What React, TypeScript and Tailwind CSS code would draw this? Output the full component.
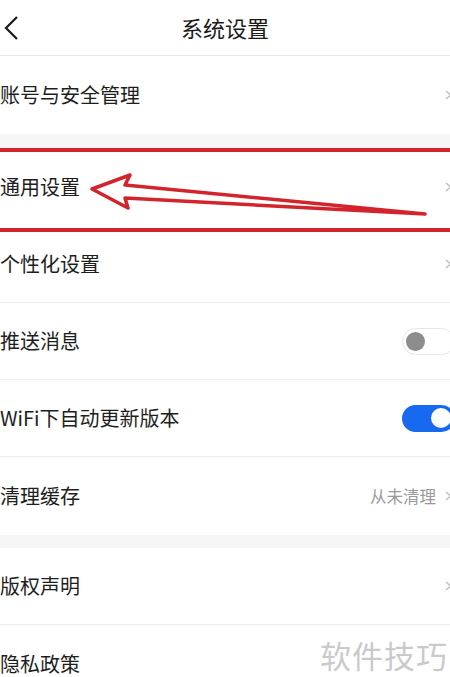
import { ReactNode } from "react";

const font = { fontFamily: '"Noto Sans CJK SC", "Noto Sans", sans-serif' };

function Chevron() {
  return (
    <svg width="10" height="14" viewBox="0 0 10 14" className="-mr-[8px] shrink-0">
      <path d="M2 3 L6.5 7 L2 11" fill="none" stroke="#c0c0c0" strokeWidth="1.5" />
    </svg>
  );
}

function Toggle({ on }: { on: boolean }) {
  if (on) {
    return (
      <div className="-mr-[9px] flex h-[27px] w-[53px] shrink-0 items-center justify-end rounded-full bg-[#1769f0] pr-[4px]">
        <div className="h-[20px] w-[20px] rounded-full bg-white" />
      </div>
    );
  }
  return (
    <div className="-mr-[9px] flex h-[27px] w-[53px] shrink-0 items-center rounded-full border border-[#e6e6e6] bg-white pl-[3px]">
      <div className="h-[19px] w-[19px] rounded-full bg-[#8c8c8c]" />
    </div>
  );
}

function Row({ label, right, border = true }: { label: string; right?: ReactNode; border?: boolean }) {
  return (
    <div className={`flex shrink-0 items-center justify-between pr-[4px] ${border ? "h-[77px] border-b border-[#ececec]" : "h-[78px]"}`}>
      <span className="text-[20px] text-[#1e1e1e]">{label}</span>
      {right ?? <Chevron />}
    </div>
  );
}

function Gap() {
  return <div className="h-[13px] shrink-0 bg-[#f6f6f6]" />;
}

export default function App() {
  return (
    <div className="relative h-[677px] w-[450px] overflow-hidden bg-white" style={font}>
      <div className="flex h-[56px] shrink-0 items-center border-b border-[#e8e8e8]">
        <svg width="20" height="26" viewBox="0 0 20 26" className="ml-[2px]">
          <path d="M15 2 L4 13 L15 24" fill="none" stroke="#1a1a1a" strokeWidth="2.2" />
        </svg>
        <div className="flex-1 pr-[22px] text-center text-[22px] text-[#1a1a1a]">系统设置</div>
      </div>

      <Row label="账号与安全管理" border={false} />
      <div className="h-[14px] shrink-0 bg-[#f6f6f6]" />
      <Row label="通用设置" border={false} />
      <Row label="个性化设置" />
      <Row label="推送消息" right={<Toggle on={false} />} />
      <Row label="WiFi下自动更新版本" right={<Toggle on />} />
      <Row
        label="清理缓存"
        border={false}
        right={
          <div className="flex items-center gap-[8px]">
            <span className="text-[16.5px] text-[#9a9a9a]">从未清理</span>
            <Chevron />
          </div>
        }
      />
      <Gap />
      <Row label="版权声明" />
      <Row label="隐私政策" border={false} />

      {/* red highlight box */}
      <div className="absolute left-[-10px] right-[-10px] top-[148px] h-[84px] border-4 border-[#d3242c]" />

      {/* red arrow */}
      <svg className="absolute left-0 top-0" width="450" height="677">
        <path
          d="M92 189 L130 175 L125 185 L425 214 L125 198 L128 208 Z"
          fill="none"
          stroke="#d3242c"
          strokeWidth="3.5"
          strokeLinejoin="round"
        />
      </svg>

      {/* watermark */}
      <div className="absolute left-[315px] top-[626px] flex h-[60px] w-[140px] items-start bg-white pl-[5px] pt-[6px] text-[31px] tracking-[1px] text-[#cacaca]">
        软件技巧
      </div>
    </div>
  );
}
